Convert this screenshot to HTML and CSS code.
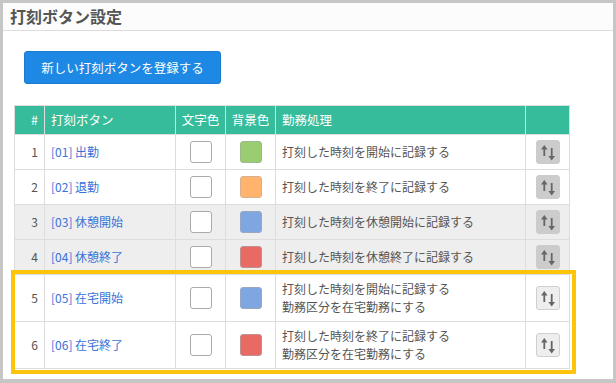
FILE: index.html
```html
<!DOCTYPE html>
<html lang="ja">
<head>
    <meta charset="UTF-8">
    <meta name="viewport" content="width=device-width, initial-scale=1.0">
    <title>打刻ボタン設定</title>
    <link rel="stylesheet" href="styles.css">
</head>
<body>
    <div class="panel">
        <h1 class="panel-title">打刻ボタン設定</h1>

        <div class="panel-body">
            <button class="btn-new" type="button">新しい打刻ボタンを登録する</button>

            <table class="stamp-table">
                <thead>
                    <tr>
                        <th class="col-no">#</th>
                        <th class="col-name">打刻ボタン</th>
                        <th class="col-color">文字色</th>
                        <th class="col-color">背景色</th>
                        <th class="col-proc">勤務処理</th>
                        <th class="col-sort"></th>
                    </tr>
                </thead>
                <tbody>
                    <tr>
                        <td class="col-no">1</td>
                        <td><a href="#">[01] 出勤</a></td>
                        <td class="col-color"><span class="swatch white"></span></td>
                        <td class="col-color"><span class="swatch green"></span></td>
                        <td>打刻した時刻を開始に記録する</td>
                        <td class="col-sort"><span class="sort-btn off"><svg width="24" height="24" viewBox="0 0 24 24"><path d="M8.3 8v8M15.7 8v9" stroke="#666" stroke-width="1.8"/><path d="M5 9.5L8.3 5l3.3 4.5zM12.4 16l3.3 4.5 3.3-4.5z" fill="#666"/></svg></span></td>
                    </tr>
                    <tr>
                        <td class="col-no">2</td>
                        <td><a href="#">[02] 退勤</a></td>
                        <td class="col-color"><span class="swatch white"></span></td>
                        <td class="col-color"><span class="swatch orange"></span></td>
                        <td>打刻した時刻を終了に記録する</td>
                        <td class="col-sort"><span class="sort-btn off"><svg width="24" height="24" viewBox="0 0 24 24"><path d="M8.3 8v8M15.7 8v9" stroke="#666" stroke-width="1.8"/><path d="M5 9.5L8.3 5l3.3 4.5zM12.4 16l3.3 4.5 3.3-4.5z" fill="#666"/></svg></span></td>
                    </tr>
                    <tr class="row-break">
                        <td class="col-no">3</td>
                        <td><a href="#">[03] 休憩開始</a></td>
                        <td class="col-color"><span class="swatch white"></span></td>
                        <td class="col-color"><span class="swatch blue"></span></td>
                        <td>打刻した時刻を休憩開始に記録する</td>
                        <td class="col-sort"><span class="sort-btn off"><svg width="24" height="24" viewBox="0 0 24 24"><path d="M8.3 8v8M15.7 8v9" stroke="#666" stroke-width="1.8"/><path d="M5 9.5L8.3 5l3.3 4.5zM12.4 16l3.3 4.5 3.3-4.5z" fill="#666"/></svg></span></td>
                    </tr>
                    <tr class="row-break">
                        <td class="col-no">4</td>
                        <td><a href="#">[04] 休憩終了</a></td>
                        <td class="col-color"><span class="swatch white"></span></td>
                        <td class="col-color"><span class="swatch red"></span></td>
                        <td>打刻した時刻を休憩終了に記録する</td>
                        <td class="col-sort"><span class="sort-btn off"><svg width="24" height="24" viewBox="0 0 24 24"><path d="M8.3 8v8M15.7 8v9" stroke="#666" stroke-width="1.8"/><path d="M5 9.5L8.3 5l3.3 4.5zM12.4 16l3.3 4.5 3.3-4.5z" fill="#666"/></svg></span></td>
                    </tr>
                    <tr>
                        <td class="col-no">5</td>
                        <td><a href="#">[05] 在宅開始</a></td>
                        <td class="col-color"><span class="swatch white"></span></td>
                        <td class="col-color"><span class="swatch blue"></span></td>
                        <td>打刻した時刻を開始に記録する<br>勤務区分を在宅勤務にする</td>
                        <td class="col-sort"><span class="sort-btn"><svg width="24" height="24" viewBox="0 0 24 24"><path d="M8.3 8v8M15.7 8v9" stroke="#666" stroke-width="1.8"/><path d="M5 9.5L8.3 5l3.3 4.5zM12.4 16l3.3 4.5 3.3-4.5z" fill="#666"/></svg></span></td>
                    </tr>
                    <tr>
                        <td class="col-no">6</td>
                        <td><a href="#">[06] 在宅終了</a></td>
                        <td class="col-color"><span class="swatch white"></span></td>
                        <td class="col-color"><span class="swatch red"></span></td>
                        <td>打刻した時刻を終了に記録する<br>勤務区分を在宅勤務にする</td>
                        <td class="col-sort"><span class="sort-btn"><svg width="24" height="24" viewBox="0 0 24 24"><path d="M8.3 8v8M15.7 8v9" stroke="#666" stroke-width="1.8"/><path d="M5 9.5L8.3 5l3.3 4.5zM12.4 16l3.3 4.5 3.3-4.5z" fill="#666"/></svg></span></td>
                    </tr>
                </tbody>
            </table>
        </div>

        <!-- 注目枠 -->
        <div class="highlight"></div>
    </div>
</body>
</html>
```

FILE: styles.css
```css
html, body {
    margin: 0;
    padding: 0;
    height: 383px;
    overflow: hidden;
}

body {
    background-color: #c6c6c6;
    font-family: 'Noto Sans CJK JP', 'Noto Sans', sans-serif;
    font-size: 12px;
    color: #555;
}

.panel {
    position: relative;
    margin: 3px 3px 0 3px;
    height: 376px;
    background-color: #ffffff;
}

.panel-title {
    margin: 0;
    height: 27px;
    padding: 0 0 0 7px;
    font-size: 16px;
    font-weight: bold;
    line-height: 26px;
    color: #555;
    background-color: #fcfcfc;
    border-bottom: 1px solid #dcdcdc;
}

.panel-body {
    padding: 20px 0 0 11px;
}

.btn-new {
    display: block;
    width: 197px;
    height: 33px;
    margin-left: 10px;
    background-color: #1e88e5;
    color: #ffffff;
    border: 1px solid #1a7bd0;
    border-radius: 3px;
    font-family: inherit;
    font-size: 12.5px;
    padding: 0;
    cursor: pointer;
}

.stamp-table {
    margin-top: 21px;
    width: 556px;
    border-collapse: collapse;
    table-layout: fixed;
}

.stamp-table th,
.stamp-table td {
    border: 1px solid #dddddd;
    padding: 5px 6px;
    line-height: 18px;
    text-align: left;
    vertical-align: middle;
    overflow: hidden;
    white-space: nowrap;
}

.stamp-table th {
    background-color: #36bc9b;
    color: #ffffff;
    font-weight: normal;
    font-size: 12.5px;
}

.stamp-table th.col-no,
.stamp-table td.col-no {
    width: 17px;
    text-align: right;
}

.stamp-table .col-name {
    width: 118px;
}

.stamp-table th.col-color,
.stamp-table td.col-color {
    width: 49px;
    padding-left: 0;
    padding-right: 0;
    text-align: center;
}

.stamp-table td.col-color {
    font-size: 0;
}

.stamp-table .col-proc {
    width: 237px;
}

.stamp-table .col-sort {
    text-align: center;
    font-size: 0;
}

.stamp-table a {
    color: #3a72d6;
    text-decoration: none;
}

.row-break td {
    background-color: #eeeeee;
}

.swatch {
    display: inline-block;
    width: 20px;
    height: 20px;
    border: 1px solid #aaaaaa;
    border-radius: 3px;
    vertical-align: middle;
}

.swatch.white { background-color: #ffffff; }
.swatch.green { background-color: #99cd6f; border-color: #a0b890; }
.swatch.orange { background-color: #ffb36d; border-color: #d8b090; }
.swatch.blue { background-color: #7fa6e1; border-color: #98a8c0; }
.swatch.red { background-color: #e96a64; border-color: #c09090; }

.sort-btn {
    display: inline-block;
    width: 22px;
    height: 22px;
    border: 1px solid #cfcfcf;
    border-radius: 3px;
    background-color: #eeeeee;
    vertical-align: middle;
}

.sort-btn.off {
    background-color: #cccccc;
    border-color: #cccccc;
}

.sort-btn svg {
    display: block;
    margin: -1px;
}

.highlight {
    position: absolute;
    left: 8px;
    top: 267px;
    width: 557px;
    height: 96px;
    border: 4px solid #fdc40c;
    pointer-events: none;
}
```
